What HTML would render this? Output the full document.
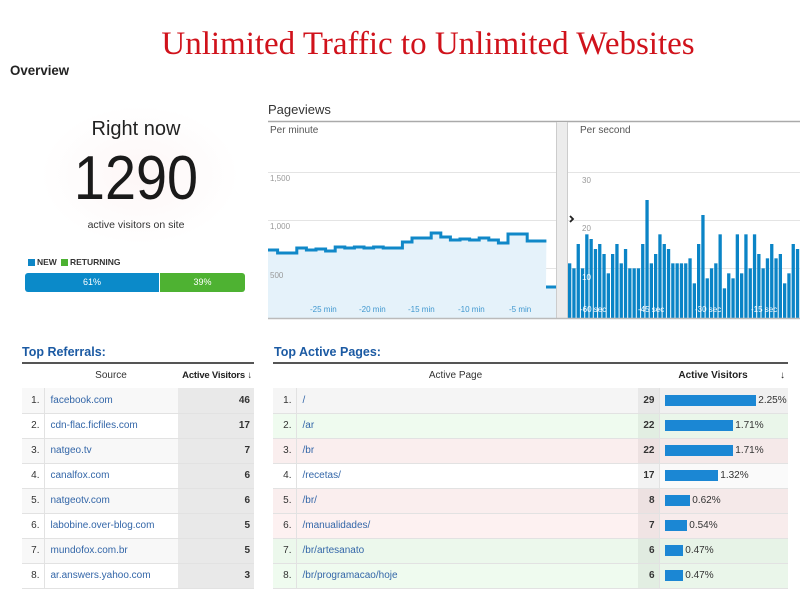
<!DOCTYPE html>
<html><head><meta charset="utf-8"><style>
*{margin:0;padding:0;box-sizing:border-box}
body{width:800px;height:600px;background:#fff;position:relative;overflow:hidden;font-family:"Liberation Sans",Arial,sans-serif}
.a{position:absolute;white-space:nowrap}
table{border-collapse:collapse;position:absolute;font-size:10px;table-layout:fixed}
td{height:25px;border-bottom:1px solid #e2e2e2;color:#333;white-space:nowrap;overflow:hidden}
.lk{color:#3366a8}
</style></head><body>
<div class="a" style="left:0;width:856px;text-align:center;top:26px;font-family:'Liberation Serif',serif;font-size:33px;color:#d0121b">Unlimited Traffic to Unlimited Websites</div>
<div class="a" style="left:10px;top:62px;font-size:14px;font-weight:bold;color:#222;transform:scaleX(.95);transform-origin:left">Overview</div>
<div class="a" style="left:40px;top:105px;width:200px;height:140px;border-radius:50%;background:radial-gradient(ellipse,#fdf6f6 0%,#fff 70%)"></div>
<div class="a" style="left:36px;width:200px;text-align:center;top:118px;font-size:20px;color:#222">Right now</div>
<div class="a" style="left:36px;width:200px;text-align:center;top:143px;font-size:62px;color:#1a1a1a;transform:scaleX(.9)">1290</div>
<div class="a" style="left:36px;width:200px;text-align:center;top:219px;font-size:10.5px;color:#333">active visitors on site</div>
<div class="a" style="left:28px;top:259px;width:7px;height:7px;background:#0e86c6"></div>
<div class="a" style="left:37px;top:257px;font-size:8.5px;font-weight:bold;color:#333">NEW</div>
<div class="a" style="left:61px;top:259px;width:7px;height:7px;background:#4cb132"></div>
<div class="a" style="left:70px;top:257px;font-size:8.5px;font-weight:bold;color:#333">RETURNING</div>
<div class="a" style="left:25px;top:273px;width:134px;height:19px;background:#0b8ac9;border-radius:3px 0 0 3px;color:#fff;font-size:9px;text-align:center;line-height:19px">61%</div>
<div class="a" style="left:160px;top:273px;width:85px;height:19px;background:#4eb232;border-radius:0 3px 3px 0;color:#fff;font-size:9px;text-align:center;line-height:19px">39%</div>

<div class="a" style="left:268px;top:102px;font-size:13px;color:#333">Pageviews</div>
<svg class="a" style="left:0;top:0" width="800" height="330">
<line x1="268" y1="121.5" x2="800" y2="121.5" stroke="#aaa" stroke-width="1.5"/>
<rect x="557" y="122" width="11" height="197" fill="#ececec"/>
<line x1="556.5" y1="122" x2="556.5" y2="319" stroke="#ccc"/>
<line x1="567.5" y1="122" x2="567.5" y2="319" stroke="#ccc"/>
<g stroke="#e4e4e4"><line x1="268" y1="172.5" x2="556" y2="172.5"/><line x1="268" y1="220.5" x2="556" y2="220.5"/><line x1="268" y1="268.5" x2="556" y2="268.5"/>
<line x1="568" y1="172.5" x2="800" y2="172.5"/><line x1="568" y1="220.5" x2="800" y2="220.5"/><line x1="568" y1="268.5" x2="800" y2="268.5"/></g>
<path id="fill" fill="#e5f2fa" d=""/>
<path id="ln" fill="none" stroke="#1088c8" stroke-width="3" d=""/>
<g id="bars" fill="#0a84c6"></g>
<line x1="268" y1="318.5" x2="800" y2="318.5" stroke="#bbb" stroke-width="1.5"/>
<g font-size="8" fill="#999" font-family="Liberation Sans,sans-serif"><text x="270" y="181">1,500</text><text x="270" y="229">1,000</text><text x="270" y="278">500</text>
<text x="582" y="183">30</text><text x="582" y="231">20</text><text x="582" y="280" fill="#fff">10</text></g>
<g font-size="8" fill="#3f97cf" font-family="Liberation Sans,sans-serif"><text x="310" y="312">-25 min</text><text x="359" y="312">-20 min</text><text x="408" y="312">-15 min</text><text x="458" y="312">-10 min</text><text x="509" y="312">-5 min</text></g>
<g font-size="8" fill="#fff" font-family="Liberation Sans,sans-serif"><text x="580" y="312">-60 sec</text><text x="638" y="312">-45 sec</text><text x="695" y="312">-30 sec</text><text x="751" y="312">-15 sec</text></g>
<path d="M570 216 l3 3 l-3 3" stroke="#222" stroke-width="1.8" fill="none"/>
</svg>
<div class="a" style="left:580px;top:125px;font-size:10px;color:#555">Per second</div>
<div class="a" style="left:270px;top:125px;font-size:10px;color:#555">Per minute</div>

<div class="a" style="left:22px;top:345px;font-size:12.5px;font-weight:bold;color:#1b5aa3">Top Referrals:</div>
<div class="a" style="left:274px;top:345px;font-size:12.5px;font-weight:bold;color:#1b5aa3">Top Active Pages:</div>
<table style="left:22px;top:362px;width:232px;border-top:2px solid #555">
<colgroup><col style="width:22px"><col style="width:134px"><col style="width:76px"></colgroup>
<tr><td></td><td style="text-align:center">Source</td><td style="font-weight:bold;color:#222;text-align:right;padding-right:2px;font-size:9.5px;letter-spacing:-.2px">Active Visitors ↓</td></tr>
</table>
<table id="t1" style="left:22px;top:388px;width:232px"></table>
<table style="left:273px;top:362px;width:515px;border-top:2px solid #555">
<colgroup><col style="width:365px"><col style="width:150px"></colgroup>
<tr><td style="text-align:center">Active Page</td><td style="font-weight:bold;color:#222;text-align:center;position:relative">Active Visitors <span style="position:absolute;right:3px;font-weight:normal">↓</span></td></tr>
</table>
<table id="t2" style="left:273px;top:388px;width:515px"></table>
<script>
var v=[250,253,253,248,250,249,251,247,248,247,248,247,248,248,242,238,238,233,237,240,239,240,238,240,243,234,234,241,241];
var d="",x=268;v.forEach(function(y,i){d+=(i?"L":"M")+x+" "+y+" L"+(x+9.6)+" "+y+" ";x+=9.6});
document.getElementById("ln").setAttribute("d",d+" M546 287 L556 287");
document.getElementById("fill").setAttribute("d",d+" L546 287 L556 287 L556 318 L268 318 Z");
var t=[505,520,447,520,418,432,462,447,477,535,477,447,505,462,520,520,520,447,315,505,477,418,447,462,505,505,505,505,490,565,447,360,550,520,505,418,580,535,550,418,535,418,520,418,477,520,490,447,490,477,565,535,447,462];
var g="";t.forEach(function(z,i){var y=95+z/3;g+='<rect x="'+(568+i*4.3)+'" y="'+y+'" width="3.3" height="'+(318-y)+'"/>'});
document.getElementById("bars").innerHTML=g;
var r=[["facebook.com",46],["cdn-flac.ficfiles.com",17],["natgeo.tv",7],["canalfox.com",6],["natgeotv.com",6],["labobine.over-blog.com",5],["mundofox.com.br",5],["ar.answers.yahoo.com",3]];
var h='<colgroup><col style="width:22px"><col style="width:134px"><col style="width:76px"></colgroup>';r.forEach(function(a,i){h+='<tr style="background:'+(i%2?'#fff':'#f8f8f8')+'"><td style="text-align:right;padding-right:4px;border-right:1px solid #e2e2e2">'+(i+1)+'.</td><td class="lk" style="padding-left:6px">'+a[0]+'</td><td style="text-align:right;padding-right:4px;font-weight:bold;background:#e9e9e9">'+a[1]+'</td></tr>'});
document.getElementById("t1").innerHTML=h;
var p=[["/",29,"2.25%","#f5f5f5",91],["/ar",22,"1.71%","#effbef",68],["/br",22,"1.71%","#faeeee",68],["/recetas/",17,"1.32%","#fff",53],["/br/",8,"0.62%","#faeeee",25],["/manualidades/",7,"0.54%","#fdf1f1",22],["/br/artesanato",6,"0.47%","#ecf8ec",18],["/br/programacao/hoje",6,"0.47%","#effbef",18]];
h='<colgroup><col style="width:23px"><col style="width:342px"><col style="width:21px"><col style="width:129px"></colgroup>';p.forEach(function(a,i){h+='<tr style="background:'+a[3]+'"><td style="text-align:right;padding-right:4px;border-right:1px solid #e2e2e2">'+(i+1)+'.</td><td class="lk" style="padding-left:6px">'+a[0]+'</td><td style="text-align:right;padding-right:4px;font-weight:bold;background:rgba(0,0,0,.05);border-right:1px solid #e2e2e2">'+a[1]+'</td><td style="padding-left:5px;background:rgba(0,0,0,.02)"><span style="display:inline-block;vertical-align:middle;width:'+a[4]+'px;height:11px;background:#1b87d4"></span> '+a[2]+'</td></tr>'});
document.getElementById("t2").innerHTML=h;
</script>
</body></html>
